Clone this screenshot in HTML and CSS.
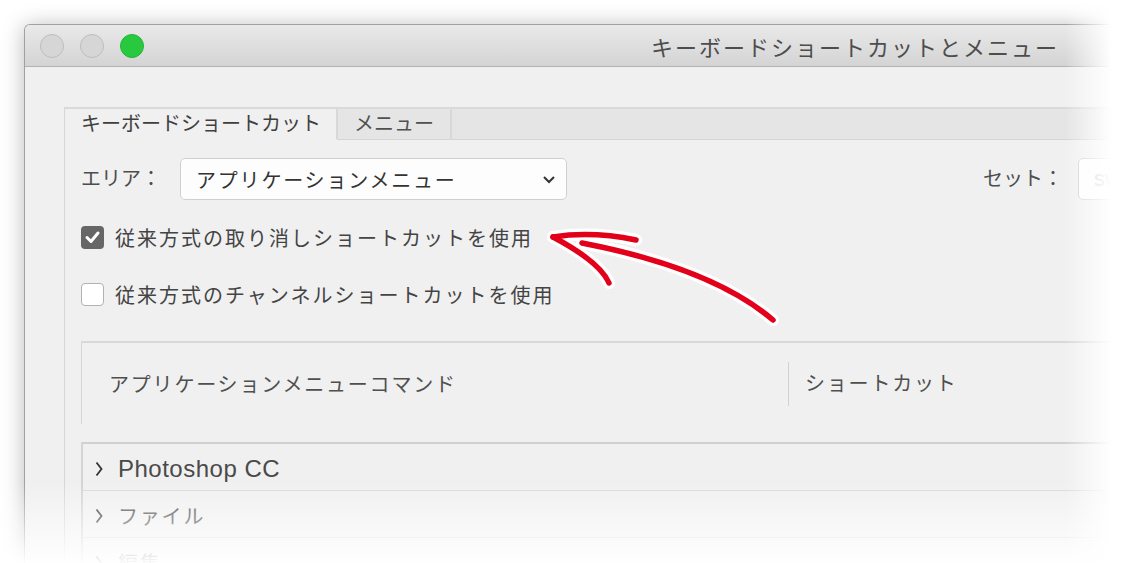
FILE: index.html
```html
<!DOCTYPE html>
<html>
<head>
<meta charset="utf-8">
<title>キーボードショートカットとメニュー</title>
<link rel="stylesheet" href="styles.css">
</head>
<body>
<div class="window">
	<div class="titlebar">
		<div class="lights">
			<span class="light"></span>
			<span class="light"></span>
			<span class="light green"></span>
		</div>
		<div class="title">キーボードショートカットとメニュー</div>
	</div>
	<div class="content">
		<div class="panel">
			<div class="tabs">
				<div class="tab active">キーボードショートカット</div>
				<div class="tab">メニュー</div>
				<div class="tab-rest"></div>
			</div>
			<div class="pane">
				<div class="area-row">
					<span class="label">エリア：</span>
					<div class="select">
						<span>アプリケーションメニュー</span>
						<svg class="chev" width="14" height="9" viewBox="0 0 14 9"><path d="M2 2 L7 7 L12 2" fill="none" stroke="#333" stroke-width="2"/></svg>
					</div>
					<div class="set">
						<span class="label">セット：</span>
						<div class="select set-select"><span>sw</span></div>
					</div>
				</div>
				<label class="check-row">
					<span class="box checked"><svg width="23" height="23" viewBox="0 0 23 23"><path d="M6 11.5 L10 15.5 L17 7" fill="none" stroke="#fff" stroke-width="3" stroke-linecap="round" stroke-linejoin="round"/></svg></span>
					<span>従来方式の取り消しショートカットを使用</span>
				</label>
				<label class="check-row">
					<span class="box"></span>
					<span>従来方式のチャンネルショートカットを使用</span>
				</label>
				<div class="table-head">
					<div class="col-cmd">アプリケーションメニューコマンド</div>
					<div class="col-key">ショートカット</div>
				</div>
				<div class="list">
					<div class="row"><svg class="arr" width="8" height="16" viewBox="0 0 8 16"><path d="M1.5 1.5 L6.5 8 L1.5 14.5" fill="none" stroke="#333" stroke-width="1.8"/></svg><span class="latin">Photoshop CC</span></div>
					<div class="row"><svg class="arr" width="8" height="16" viewBox="0 0 8 16"><path d="M1.5 1.5 L6.5 8 L1.5 14.5" fill="none" stroke="#333" stroke-width="1.8"/></svg><span>ファイル</span></div>
					<div class="row"><svg class="arr" width="8" height="16" viewBox="0 0 8 16"><path d="M1.5 1.5 L6.5 8 L1.5 14.5" fill="none" stroke="#333" stroke-width="1.8"/></svg><span>編集</span></div>
				</div>
			</div>
		</div>
	</div>
</div>
<svg class="arrow" width="1127" height="563" viewBox="0 0 1127 563">
	<g fill="none" stroke="#fff" stroke-width="12" stroke-linecap="round">
		<path d="M773 320 C738 290 680 262 582 243"/>
		<path d="M553 237 Q592 231 636 240"/>
		<path d="M553 237 Q600 262 609 283"/>
	</g>
	<g fill="none" stroke="#e2001a" stroke-width="5.5" stroke-linecap="round">
		<path d="M773 320 C738 290 680 262 582 243"/>
		<path d="M553 237 Q592 231 636 240"/>
		<path d="M553 237 Q600 262 609 283"/>
	</g>
</svg>
<div class="fade-right"></div>
<div class="fade-bottom"></div>
</body>
</html>
```
FILE: styles.css
```css
body{
	margin:0;
	background:#fff;
	overflow:hidden;
	width:1127px;
	height:563px;
	position:relative;
	font-family:"Liberation Sans","Noto Sans CJK JP",sans-serif;
	color:#4b4b4b;
}
.window{
	box-sizing:border-box;
	margin:24px 0 0 24px;
	width:1103px;
	height:539px;
	border:1px solid #a0a0a0;
	border-right:none;
	border-bottom:none;
	border-radius:6px 0 0 0;
	background:#f0f0f0;
	box-shadow:0 2px 22px rgba(0,0,0,0.28);
	overflow:hidden;
}
.titlebar{
	display:flex;
	align-items:center;
	height:41px;
	background:linear-gradient(#e9e9e9,#d4d4d4);
	border-bottom:1px solid #b2b2b2;
}
.lights{
	display:flex;
	gap:16px;
	padding-left:15px;
}
.light{
	width:22px;
	height:22px;
	border-radius:50%;
	background:#d6d6d6;
	border:1px solid #bdbdbd;
}
.light.green{
	background:#28c93f;
	border-color:#22b536;
}
.title{
	margin-left:auto;
	padding-right:68px;
	font-size:22px;
	letter-spacing:2px;
	color:#4d4d4d;
	white-space:nowrap;
}
.content{
	padding:40px 0 0 39px;
}
.panel{
	border-top:2px solid #dadada;
	border-left:1px solid #d6d6d6;
}
.tabs{
	display:flex;
	height:31px;
	font-size:20px;
	line-height:31px;
	white-space:nowrap;
}
.tab{
	padding:0 16px;
	background:#e5e5e5;
	border-right:2px solid #d8d8d8;
	border-bottom:1px solid #d4d4d4;
	color:#505050;
}
.tab.active{
	padding:0 15px 0 16px;
	background:#f0f0f0;
	border-bottom-color:transparent;
	color:#3f3f3f;
}
.tab-rest{
	flex:1;
	background:#e5e5e5;
	border-bottom:1px solid #d4d4d4;
}
.pane{
	padding:18px 0 0 16px;
}
.area-row{
	display:flex;
	align-items:center;
	height:42px;
	font-size:20px;
}
.label{
	color:#4d4d4d;
	width:80px;
	margin-right:19px;
	line-height:42px;
	white-space:nowrap;
}
.select{
	box-sizing:border-box;
	display:flex;
	align-items:center;
	justify-content:space-between;
	width:387px;
	height:42px;
	padding:0 10px 0 15px;
	border:1px solid #d0d0d0;
	border-radius:5px;
	background:#fdfdfd;
	color:#333;
	letter-spacing:1.8px;
	white-space:nowrap;
	overflow:hidden;
}
.set{
	flex:1;
	min-width:0;
	display:flex;
	align-items:center;
	margin-left:416px;
}
.set .label{
	margin-right:15px;
}
.set-select{
	flex:1;
	width:auto;
	color:#c4c4c4;
	letter-spacing:0;
	font-size:22px;
}
.check-row{
	display:flex;
	align-items:center;
	gap:11px;
	height:34px;
	font-size:20px;
	letter-spacing:2px;
	color:#444;
}
.area-row + .check-row{
	margin-top:20px;
}
.check-row + .check-row{
	margin-top:23px;
}
.box{
	box-sizing:border-box;
	width:23px;
	height:23px;
	border-radius:4px;
	background:#fff;
	border:1.5px solid #b2b2b2;
}
.box.checked{
	background:#666;
	border:none;
}
.box svg{
	display:block;
}
.table-head{
	display:flex;
	align-items:center;
	margin-top:30px;
	height:81px;
	border-top:2px solid #d8d8d8;
	border-left:1px solid #d6d6d6;
	font-size:20px;
	letter-spacing:1.8px;
	color:#4f4f4f;
}
.col-cmd{
	width:679px;
	padding-left:27px;
}
.col-key{
	border-left:1px solid #d2d2d2;
	height:44px;
	line-height:44px;
	padding-left:16px;
}
.list{
	margin-top:18px;
	border-top:2px solid #d0d0d0;
	border-left:2px solid #d4d4d4;
}
.row{
	display:flex;
	align-items:center;
	box-sizing:border-box;
	height:47px;
	padding-top:3px;
	border-bottom:1px solid #dadada;
	font-size:20px;
	letter-spacing:1.8px;
	color:#4a4a4a;
}
.arr{
	margin:0 15px 0 12px;
}
.latin{
	font-size:24px;
	letter-spacing:0.5px;
	color:#4a4a4a;
}
.arrow{
	position:absolute;
	left:0;
	top:0;
	pointer-events:none;
}
.fade-right{
	position:absolute;
	top:0;
	right:0;
	width:62px;
	height:563px;
	background:linear-gradient(to right,rgba(255,255,255,0),#fff 75%);
}
.fade-bottom{
	position:absolute;
	left:0;
	bottom:0;
	width:1127px;
	height:80px;
	background:linear-gradient(rgba(255,255,255,0),rgba(255,255,255,0.97));
}
```
